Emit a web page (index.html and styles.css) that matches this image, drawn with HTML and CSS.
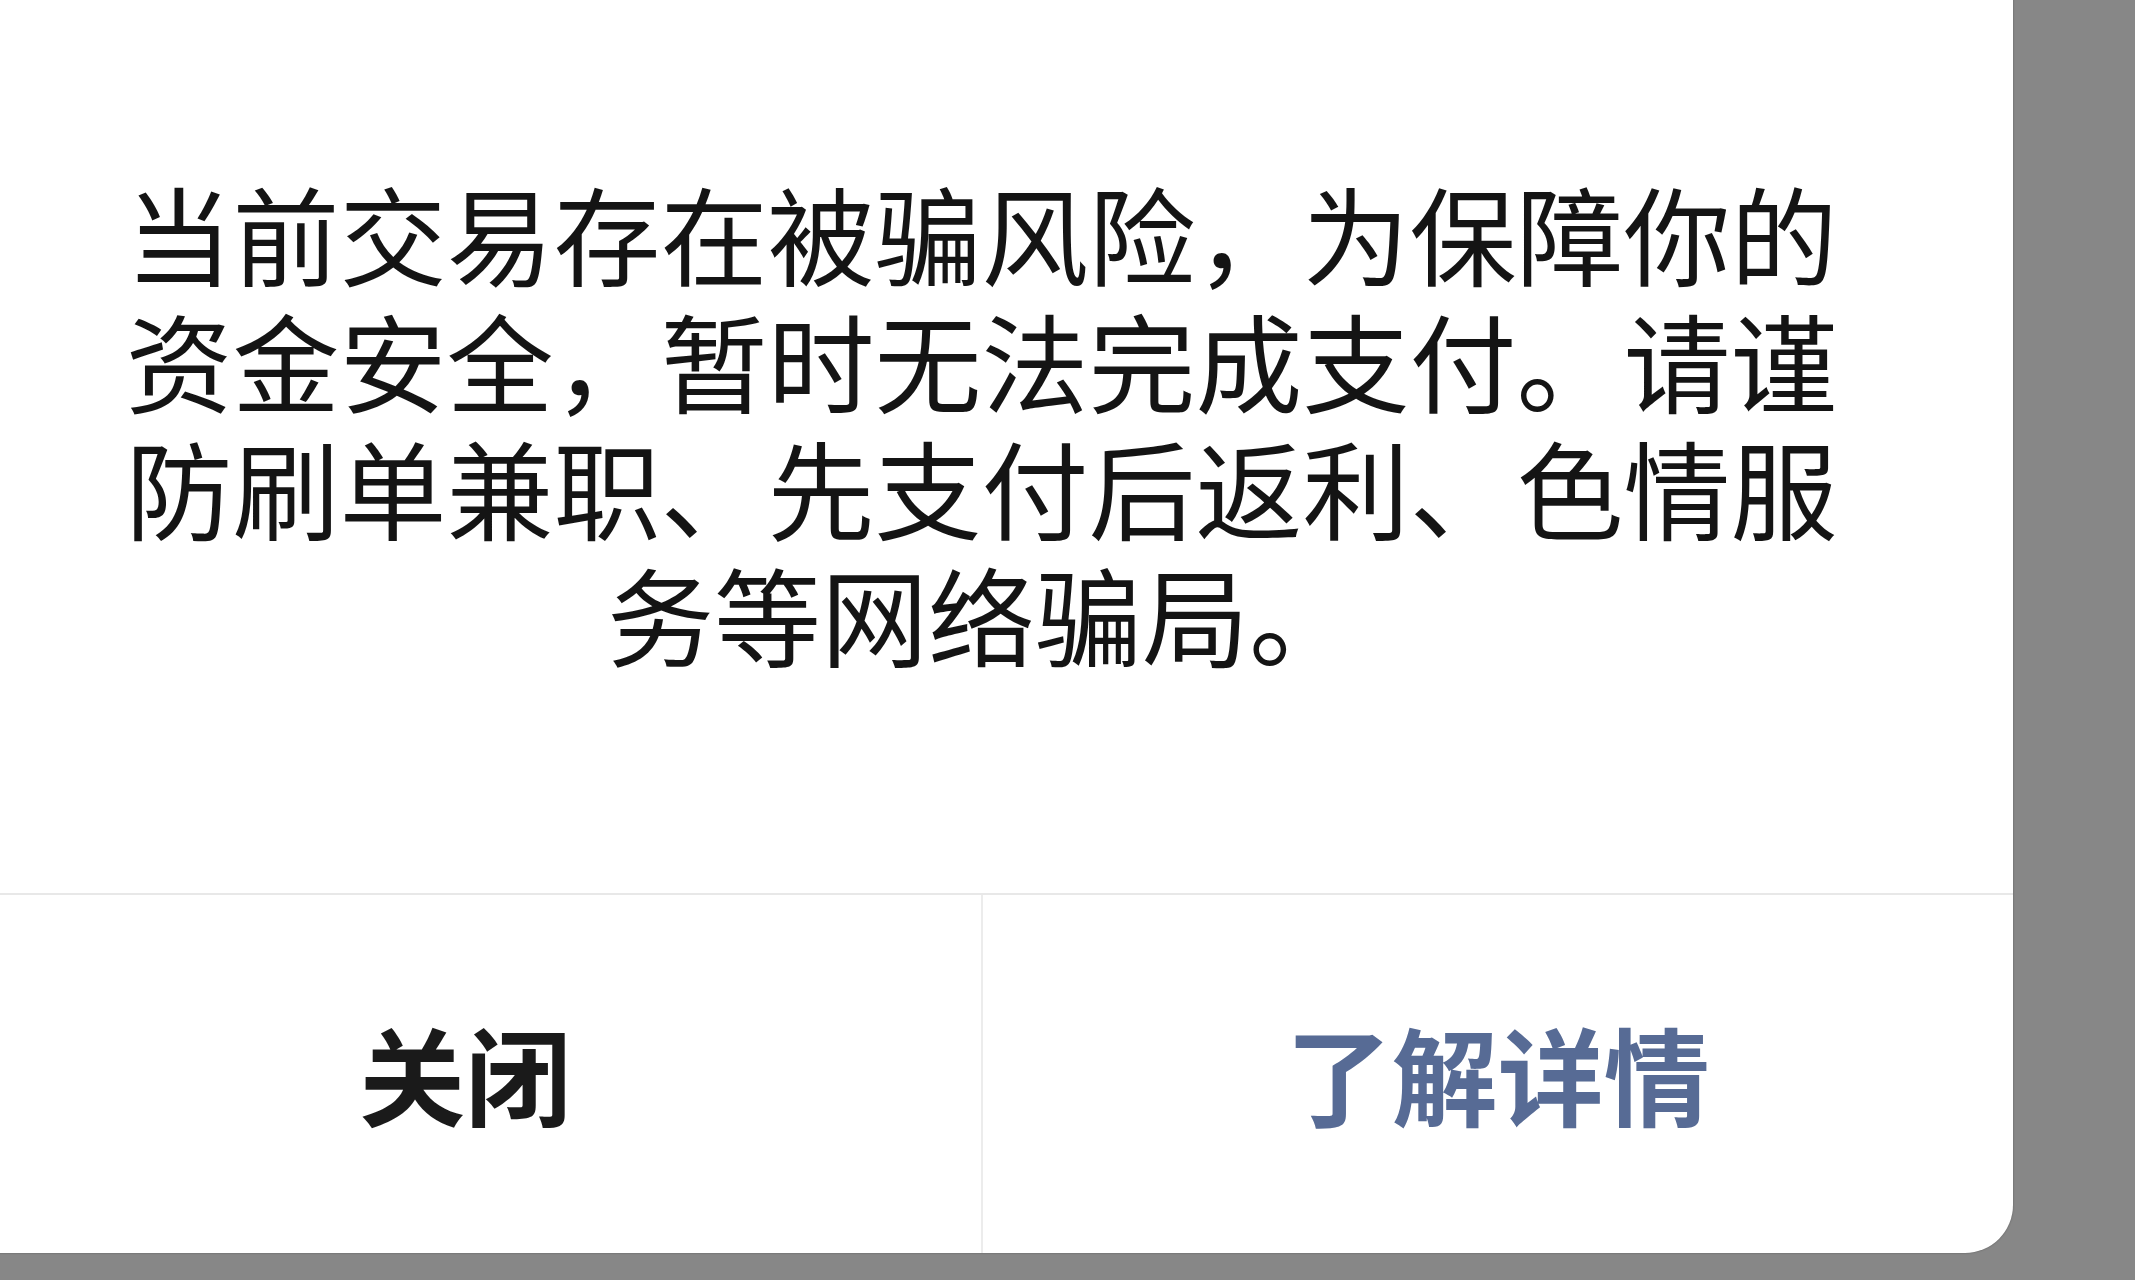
FILE: index.html
```html
<!DOCTYPE html>
<html lang="zh-CN">
<head>
  <meta charset="UTF-8" />
  <meta name="viewport" content="width=device-width, initial-scale=1.0" />
  <title>支付提示</title>
  <link rel="stylesheet" href="styles.css">
</head>
<body>
  <div class="dialog">
    <div class="dialog-body">
      <p class="message">当前交易存在被骗风险，为保障你的资金安全，暂时无法完成支付。请谨防刷单兼职、先支付后返利、色情服务等网络骗局。</p>
    </div>
    <div class="dialog-footer">
      <button class="btn btn-close">关闭</button>
      <button class="btn btn-more">了解详情</button>
    </div>
  </div>
</body>
</html>
```

FILE: styles.css
```css
html, body {
  margin: 0;
  height: 100%;
  overflow: hidden;
}
body {
  background: #878787;
  font-family: "Noto Sans CJK SC", "Noto Sans", sans-serif;
  color: #141414;
}
.dialog {
  width: 2063px;
  height: 1313px;
  margin: -60px 0 0 -50px;
  background: #fff;
  border-radius: 48px;
  box-shadow: 0 0 2px rgba(0, 0, 0, 0.35);
  display: flex;
  flex-direction: column;
}
.dialog-body {
  flex: 1;
  padding: 228px 160px 0;
}
.message {
  margin: 0;
  font-size: 107px;
  line-height: 127px;
  text-align: center;
}
.dialog-footer {
  height: 358px;
  display: flex;
  border-top: 2px solid #e8e8e8;
}
.btn {
  flex: 1;
  border: none;
  background: none;
  font-family: inherit;
  font-size: 106px;
  font-weight: 700;
  padding: 0 0 4px;
  color: #1a1a1a;
}
.btn + .btn {
  border-left: 2px solid #ececec;
}
.btn-more {
  color: #576b95;
}
```
